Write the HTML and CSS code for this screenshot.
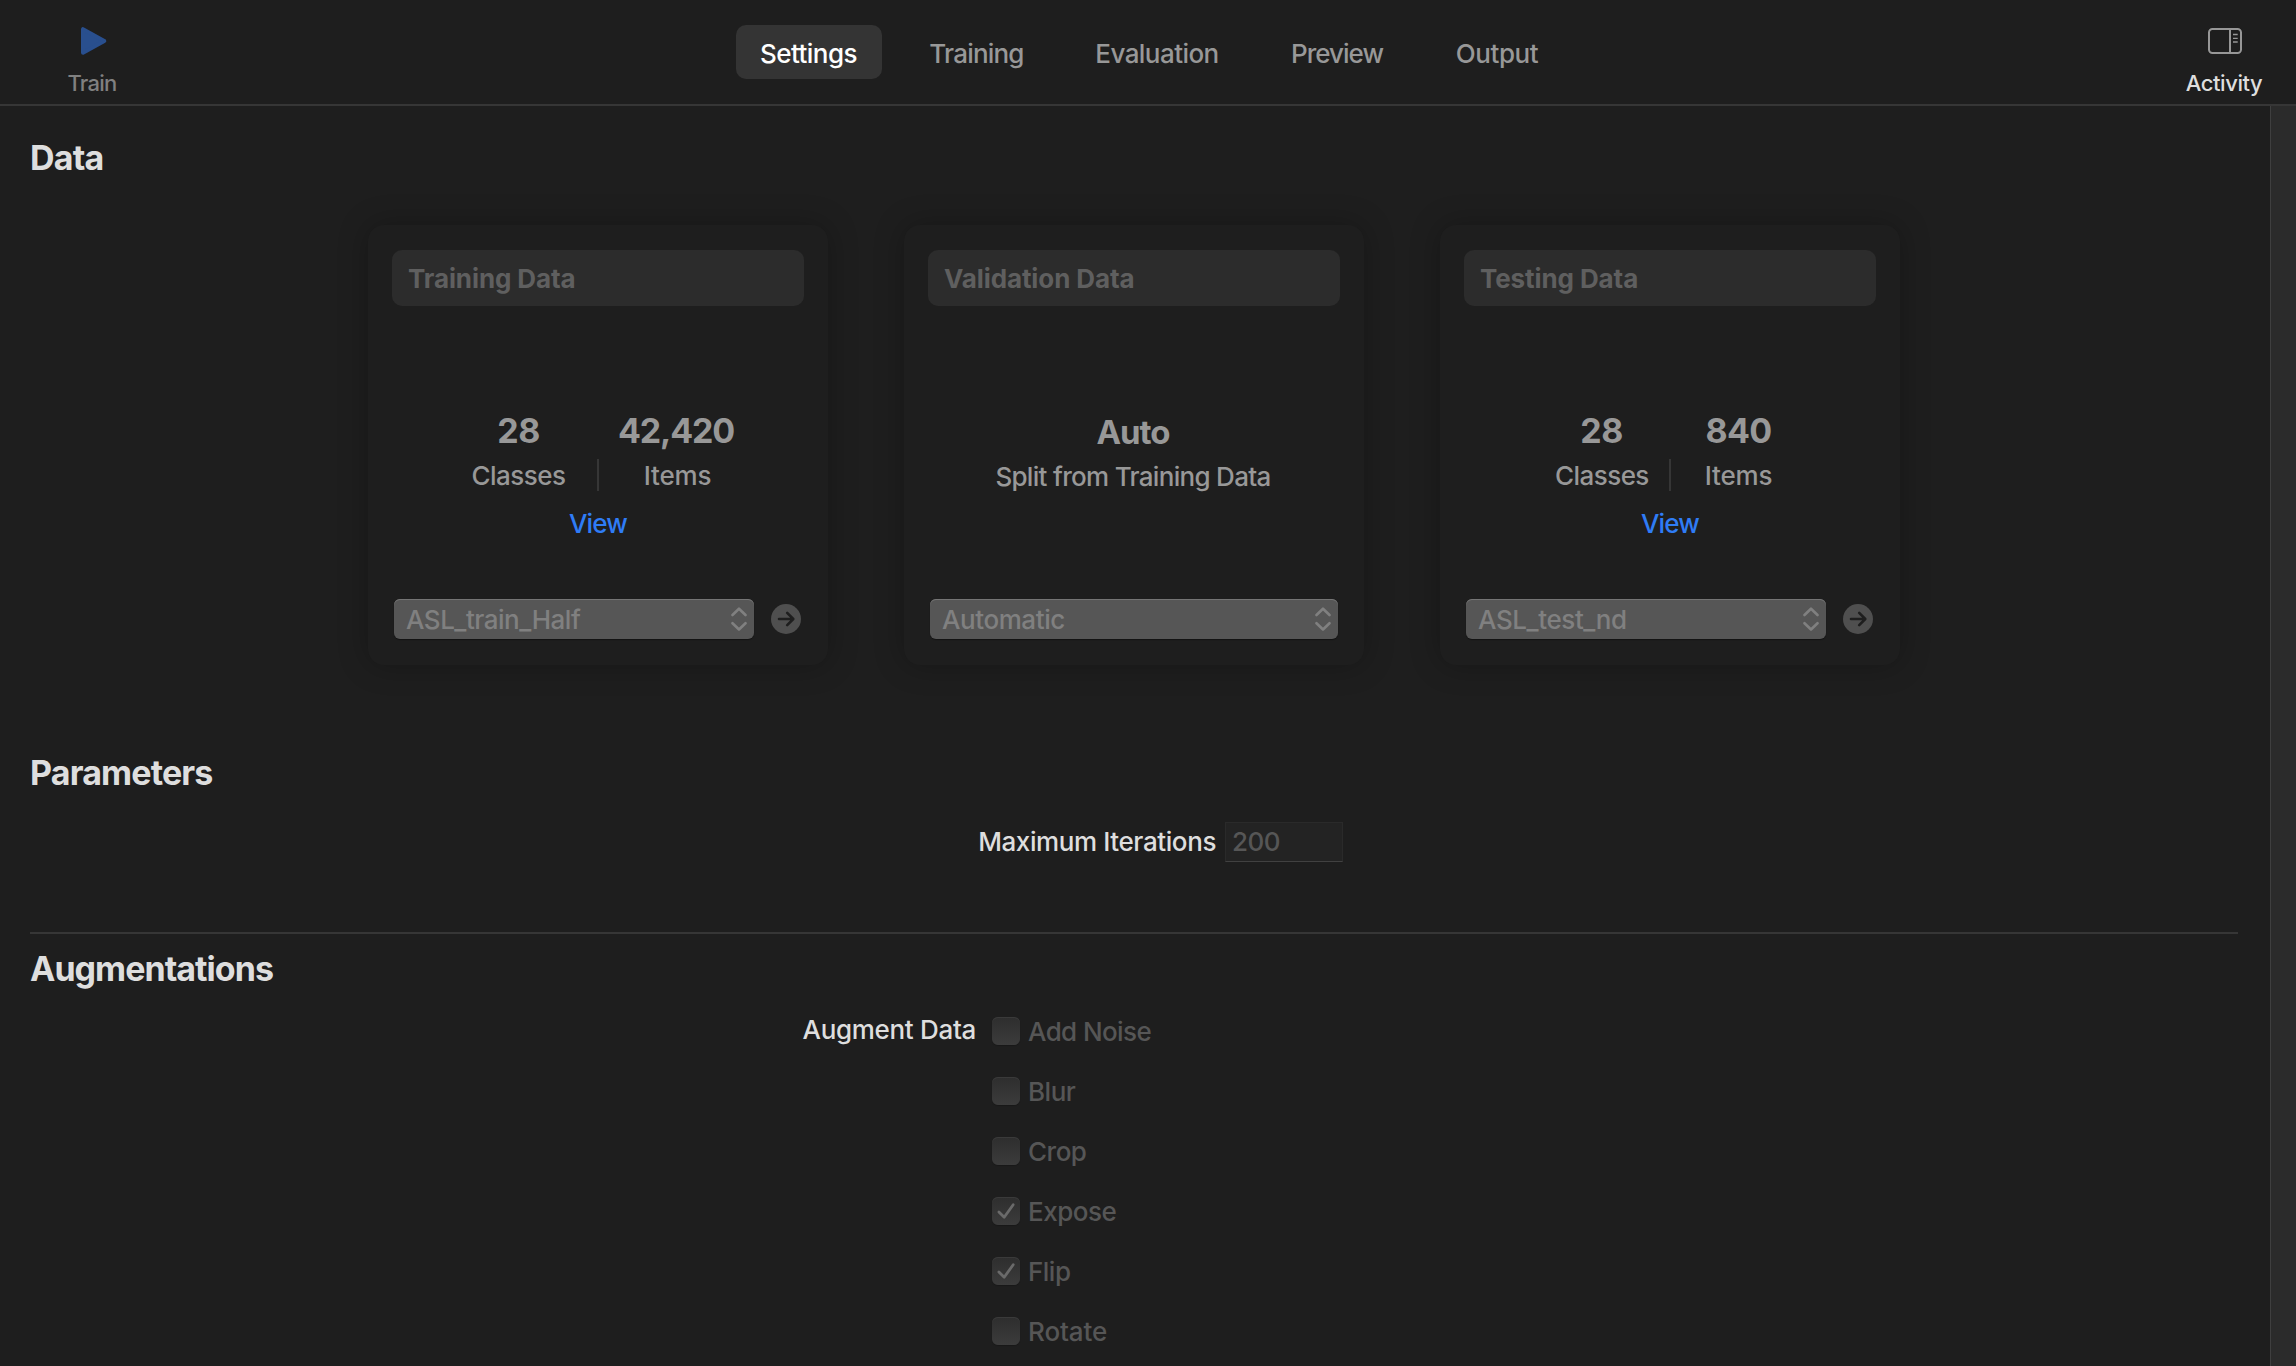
FILE: index.html
```
<!DOCTYPE html>
<html lang="en">
<head>
<meta charset="utf-8">
<title>Settings</title>
<link rel="stylesheet" href="styles.css">
</head>
<body>
<header class="toolbar">
  <div class="tool tool-train">
    <svg class="tool-icon" width="40" height="36" viewBox="0 0 40 36"><path d="M11 6.2V29.8L32.3 18Z" fill="#294f8e" stroke="#294f8e" stroke-width="4" stroke-linejoin="round"/></svg>
    <span class="tool-label train-label">Train</span>
  </div>
  <nav class="tabs">
    <span class="tab tab-settings active">Settings</span>
    <span class="tab tab-training">Training</span>
    <span class="tab tab-evaluation">Evaluation</span>
    <span class="tab tab-preview">Preview</span>
    <span class="tab tab-output">Output</span>
  </nav>
  <div class="tool tool-activity">
    <svg class="tool-icon" width="40" height="36" viewBox="0 0 40 36" fill="none" stroke="#979797"><rect x="5" y="6" width="32" height="24" rx="3.5" stroke-width="2"/><path d="M26 6V30" stroke-width="2"/><path d="M29 11.5H33.7M29 15.3H33.7M29 19H33.7" stroke-width="1.3"/></svg>
    <span class="tool-label activity-label">Activity</span>
  </div>
</header>
<div class="body">
<main class="content">
  <section>
    <h2 class="heading heading-data">Data</h2>
    <div class="cards">
      <article class="card">
        <div class="card-title">Training Data</div>
        <div class="stats">
          <span class="number">28</span><span></span><span class="number number-long">42,420</span>
          <span class="caption caption-classes">Classes</span><span class="separator"></span><span class="caption caption-items">Items</span>
        </div>
        <a class="view">View</a>
        <div class="card-footer">
          <div class="select"><span class="select-half">ASL_train_Half</span><svg class="chevrons" width="16" height="24" viewBox="0 0 16 24"><path d="M1.5 8L8 1.7L14.5 8M1.5 16.2L8 22.5L14.5 16.2"/></svg></div>
          <svg class="go" width="30" height="30" viewBox="0 0 30 30"><circle cx="15" cy="15" r="15" fill="#4f4f4f" stroke="none"/><path d="M8 15H22M16.2 8.9L22.3 15L16.2 21.1"/></svg>
        </div>
      </article>
      <article class="card">
        <div class="card-title">Validation Data</div>
        <div class="auto">
          <span class="auto-name">Auto</span>
          <span class="auto-note">Split from Training Data</span>
        </div>
        <div class="card-footer">
          <div class="select"><span class="select-auto">Automatic</span><svg class="chevrons" width="16" height="24" viewBox="0 0 16 24"><path d="M1.5 8L8 1.7L14.5 8M1.5 16.2L8 22.5L14.5 16.2"/></svg></div>
        </div>
      </article>
      <article class="card">
        <div class="card-title">Testing Data</div>
        <div class="stats stats-narrow">
          <span class="number">28</span><span></span><span class="number">840</span>
          <span class="caption caption-classes">Classes</span><span class="separator"></span><span class="caption caption-items">Items</span>
        </div>
        <a class="view">View</a>
        <div class="card-footer">
          <div class="select"><span class="select-test">ASL_test_nd</span><svg class="chevrons" width="16" height="24" viewBox="0 0 16 24"><path d="M1.5 8L8 1.7L14.5 8M1.5 16.2L8 22.5L14.5 16.2"/></svg></div>
          <svg class="go" width="30" height="30" viewBox="0 0 30 30"><circle cx="15" cy="15" r="15" fill="#4f4f4f" stroke="none"/><path d="M8 15H22M16.2 8.9L22.3 15L16.2 21.1"/></svg>
        </div>
      </article>
    </div>
  </section>
  <section class="parameters">
    <h2 class="heading">Parameters</h2>
    <div class="parameter-row">
      <span class="label iterations-label">Maximum Iterations</span>
      <span class="field">200</span>
    </div>
  </section>
  <section class="augmentations">
    <h2 class="heading heading-aug">Augmentations</h2>
    <div class="augment">
      <span class="label augment-label">Augment Data</span>
      <div class="options">
        <div class="option"><span class="box"></span><span class="option-noise">Add Noise</span></div>
        <div class="option"><span class="box"></span><span>Blur</span></div>
        <div class="option"><span class="box"></span><span>Crop</span></div>
        <div class="option"><span class="box"><svg width="28" height="28" viewBox="0 0 28 28"><path class="tick" d="M6.9 15L12.2 20.3L21.2 7.7"/></svg></span><span>Expose</span></div>
        <div class="option"><span class="box"><svg width="28" height="28" viewBox="0 0 28 28"><path class="tick" d="M6.9 15L12.2 20.3L21.2 7.7"/></svg></span><span>Flip</span></div>
        <div class="option"><span class="box"></span><span class="option-rotate">Rotate</span></div>
      </div>
    </div>
  </section>
</main>
<aside class="scroll-track"></aside>
</div>
</body>
</html>
```
FILE: styles.css
```
* { box-sizing: border-box; }

body {
  margin: 0;
  height: 1366px;
  display: flex;
  flex-direction: column;
  overflow: hidden;
  background: #1e1e1e;
  color: #dedede;
  font-family: "Inter", sans-serif;
  font-size: 26px;
  font-weight: 450;
  line-height: 32px;
  white-space: nowrap;
}

svg { display: block; flex: none; }

/* Toolbar */
.toolbar {
  display: flex;
  align-items: flex-start;
  height: 106px;
  flex: none;
  border-bottom: 2px solid #363636;
}

.tool {
  display: flex;
  flex-direction: column;
  align-items: center;
  padding-top: 23px;
}

.tool-train { width: 184px; }
.tool-activity { width: 144px; margin-left: auto; }
.tool-label { margin-top: 8px; font-size: 22px; line-height: 32px; }
.train-label { color: #808080; letter-spacing: -0.75px; }
.activity-label { color: #dedede; letter-spacing: -0.4px; }

.tabs { display: flex; gap: 24px; margin: 25px 0 0 552px; }

.tab {
  height: 54px;
  border-radius: 10px;
  color: #989898;
  line-height: 58px;
  text-align: center;
}

.tab-settings { width: 146px; padding-right: 1px; letter-spacing: -0.55px; }
.tab-training { width: 141px; letter-spacing: -0.8px; }
.tab-evaluation { width: 172px; letter-spacing: -0.55px; }
.tab-preview { width: 140px; letter-spacing: -1px; }
.tab-output { width: 132px; letter-spacing: -0.4px; }
.tab.active { background: #343434; color: #fff; font-weight: 500; }

/* Page */
.body { display: flex; flex: 1; }
.content { flex: 1; padding: 32px 32px 0 30px; }
.scroll-track { width: 26px; background: #2b2b2b; border-left: 1px solid #3f3f3f; }

.heading {
  margin: 0;
  font-size: 34px;
  font-weight: 650;
  line-height: 40px;
  letter-spacing: -0.85px;
}

.heading-data { letter-spacing: -0.8px; }
.heading-aug { letter-spacing: -0.97px; }

/* Data cards */
.cards { display: flex; justify-content: center; gap: 76px; margin-top: 47px; }

.card {
  display: flex;
  flex-direction: column;
  width: 460px;
  height: 440px;
  padding: 25px 24px 26px;
  border-radius: 16px;
  background: #1e1e1e;
  box-shadow: 0 0 30px rgba(0, 0, 0, 0.26);
  color: #989898;
}

.card-title {
  height: 56px;
  padding-left: 16px;
  border-radius: 10px;
  background: #2c2c2c;
  color: #5f5f5f;
  font-weight: 650;
  line-height: 58px;
  letter-spacing: -0.1px;
}

.stats {
  display: grid;
  grid-template-columns: 115px 2px 115px;
  grid-template-rows: 40px 32px;
  gap: 8px 21px;
  justify-content: center;
  margin-top: 105px;
  text-align: center;
}

.stats-narrow { grid-template-columns: 93px 2px 93px; }
.number { font-size: 34px; font-weight: 650; line-height: 40px; letter-spacing: -0.6px; }
.number-long { letter-spacing: -1.2px; margin: 0 1px 0 -2px; }
.caption { line-height: 34px; }
.caption-classes { letter-spacing: -0.55px; }
.caption-items { letter-spacing: -0.2px; }
.separator { background: #363636; }
.view { margin-top: 17px; color: #2f7cf6; text-align: center; letter-spacing: -0.8px; }

.auto { display: flex; flex-direction: column; align-items: center; gap: 8px; margin: 106px 2px 0 0; }
.auto-name { font-size: 33px; font-weight: 650; line-height: 40px; letter-spacing: -1px; }
.auto-note { line-height: 34px; letter-spacing: -0.69px; }

.card-footer { display: flex; align-items: center; gap: 17px; margin: auto 3px 0 2px; }
.card-footer .select:only-child { margin-right: -1px; }

.select {
  display: flex;
  flex: 1;
  align-items: center;
  justify-content: space-between;
  height: 40px;
  padding: 0 7px 0 12px;
  border-radius: 6px;
  background: #565656;
  box-shadow: inset 0 1px #757575, 0 1px 1px rgba(0, 0, 0, 0.4);
  color: #808080;
}

.select span { padding-top: 2px; }
.select-half { letter-spacing: -0.48px; }
.select-auto { letter-spacing: -0.42px; }
.select-test { letter-spacing: -0.4px; }
.chevrons { fill: none; stroke: #808080; stroke-width: 2.6; stroke-linecap: round; stroke-linejoin: round; }
.go { fill: none; stroke: #1e1e1e; stroke-width: 2.6; stroke-linecap: round; stroke-linejoin: round; }

/* Parameters */
.parameters { height: 181px; margin-top: 88px; border-bottom: 2px solid #363636; }

.parameter-row {
  display: grid;
  grid-template-columns: 1186px 118px;
  gap: 9px;
  margin-top: 29px;
  line-height: 40px;
}

.label { text-align: right; letter-spacing: -0.32px; }
.iterations-label { letter-spacing: -0.4px; }

.field {
  height: 40px;
  padding-left: 6px;
  border: 1px solid #2a2a2a;
  border-bottom-color: #414141;
  background: #232323;
  color: #565656;
  line-height: 38px;
  letter-spacing: -0.5px;
}

/* Augmentations */
.augmentations { margin-top: 15px; }
.augment { display: grid; grid-template-columns: 946px auto; gap: 16px; margin-top: 28px; }
.augment-label { line-height: 26px; }
.options { display: flex; flex-direction: column; gap: 32px; }
.option { display: flex; gap: 8px; height: 28px; color: #565656; line-height: 30px; letter-spacing: -0.5px; }
.option-noise { letter-spacing: -0.6px; }
.option-rotate { letter-spacing: -0.1px; }

.box {
  width: 28px;
  height: 28px;
  flex: none;
  border-radius: 6px;
  background: linear-gradient(#2e2e2e, #3c3c3c);
  box-shadow: inset 0 1px #3a3a3a, 0 1px 1px rgba(0, 0, 0, 0.2);
}

.tick { fill: none; stroke: #6a6a6a; stroke-width: 2.8; stroke-linecap: round; stroke-linejoin: round; }
```
